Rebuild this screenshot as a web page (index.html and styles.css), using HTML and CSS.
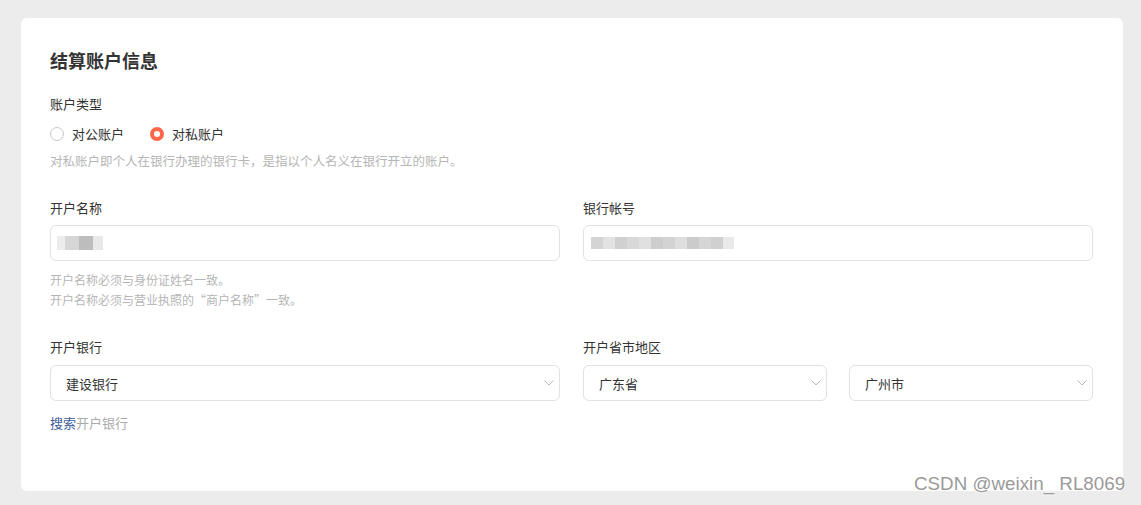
FILE: index.html
```html
<!DOCTYPE html>
<html lang="zh-CN">
<head>
<meta charset="utf-8">
<title>结算账户信息</title>
<link rel="stylesheet" href="styles.css">
</head>
<body>
<div class="card">
  <h2 class="title">结算账户信息</h2>

  <div class="field">
    <div class="label">账户类型</div>
    <div class="radios">
      <label class="radio"><span class="dot"></span>对公账户</label>
      <label class="radio checked"><span class="dot"></span>对私账户</label>
    </div>
    <div class="help help-wide">对私账户即个人在银行办理的银行卡，是指以个人名义在银行开立的账户。</div>
  </div>

  <div class="row row-1">
    <div class="field">
      <div class="label">开户名称</div>
      <div class="input">
        <div class="mask mask-name">
          <i style="background:#ececec;width:8px"></i>
          <i style="background:#d6d6d6;width:14px"></i>
          <i style="background:#bdbdbd;width:14px"></i>
          <i style="background:#e8e8e8;width:10px"></i>
        </div>
      </div>
      <div class="help help-lines">
        <div>开户名称必须与身份证姓名一致。</div>
        <div>开户名称必须与营业执照的“商户名称”一致。</div>
      </div>
    </div>
    <div class="field">
      <div class="label">银行帐号</div>
      <div class="input">
        <div class="mask mask-acct">
          <i style="background:#d4d4d4;width:12px"></i>
          <i style="background:#e2e2e2;width:12px"></i>
          <i style="background:#d0d0d0;width:12px"></i>
          <i style="background:#d8d8d8;width:12px"></i>
          <i style="background:#e0e0e0;width:12px"></i>
          <i style="background:#cdcdcd;width:12px"></i>
          <i style="background:#d3d3d3;width:12px"></i>
          <i style="background:#dedede;width:12px"></i>
          <i style="background:#cbcbcb;width:12px"></i>
          <i style="background:#d6d6d6;width:12px"></i>
          <i style="background:#d0d0d0;width:12px"></i>
          <i style="background:#e9e9e9;width:11px"></i>
        </div>
      </div>
    </div>
  </div>

  <div class="row row-2">
    <div class="field">
      <div class="label">开户银行</div>
      <div class="select">
        <span>建设银行</span>
        <svg class="chev" width="10" height="6" viewBox="0 0 10 6"><path d="M0.5 0.5 L5 5 L9.5 0.5" fill="none" stroke="#b8b8b8" stroke-width="1"/></svg>
      </div>
      <div class="help search"><a class="link">搜索</a>开户银行</div>
    </div>
    <div class="field">
      <div class="label">开户省市地区</div>
      <div class="pair">
        <div class="select">
          <span>广东省</span>
          <svg class="chev" width="10" height="6" viewBox="0 0 10 6"><path d="M0.5 0.5 L5 5 L9.5 0.5" fill="none" stroke="#b8b8b8" stroke-width="1"/></svg>
        </div>
        <div class="select">
          <span>广州市</span>
          <svg class="chev" width="10" height="6" viewBox="0 0 10 6"><path d="M0.5 0.5 L5 5 L9.5 0.5" fill="none" stroke="#b8b8b8" stroke-width="1"/></svg>
        </div>
      </div>
    </div>
  </div>
</div>
<div class="watermark">CSDN @weixin_ RL8069</div>
</body>
</html>
```

FILE: styles.css
```css
html, body {
  margin: 0;
  padding: 0;
}
body {
  background: #ececec;
  font-family: "Noto Sans CJK SC", "Noto Sans", sans-serif;
  color: #333;
  padding: 18px 18px 14px 21px;
  position: relative;
}
.card {
  background: #fff;
  border-radius: 6px;
  height: 473px;
  box-sizing: border-box;
  padding: 30px 30px 0 29px;
}
.title {
  margin: 0;
  font-size: 18px;
  line-height: 24px;
  font-weight: 700;
  color: #333;
}
.field {
  display: flex;
  flex-direction: column;
}
.card > .field {
  margin-top: 22px;
}
.label {
  font-size: 13px;
  line-height: 20px;
  height: 20px;
  color: #333;
}
.radios {
  display: flex;
  margin-top: 10px;
  height: 20px;
  align-items: center;
}
.radio {
  display: flex;
  align-items: center;
  font-size: 13px;
  line-height: 20px;
  color: #333;
  margin-right: 26px;
}
.dot {
  width: 14px;
  height: 14px;
  box-sizing: border-box;
  border: 1px solid #c8c8cc;
  border-radius: 50%;
  margin-right: 8px;
  background: #fff;
}
.radio.checked .dot {
  border: 4px solid #ff6548;
}
.help {
  font-size: 12px;
  line-height: 20px;
  color: #b5b5b5;
  margin-top: 7px;
}
.help-wide {
  font-size: 12.5px;
}
.help-lines > div {
  height: 20px;
}
.row {
  display: grid;
  grid-template-columns: 510px 510px;
  column-gap: 23px;
  align-items: start;
}
.row-1 {
  margin-top: 27px;
}
.row-2 {
  margin-top: 27px;
}
.input, .select {
  margin-top: 7px;
  height: 36px;
  box-sizing: border-box;
  border: 1px solid #e2e2e2;
  border-radius: 6px;
  display: flex;
  align-items: center;
}
.row-2 .select {
  margin-top: 8px;
}
.input {
  padding-left: 6px;
}
.mask {
  display: flex;
  filter: blur(0.6px);
}
.mask i {
  display: block;
  height: 14px;
}
.mask-acct {
  padding-left: 1px;
}
.mask-acct i {
  height: 12px;
}
.help-lines {
  margin-top: 9px;
}
.select {
  padding: 0 5px 0 15px;
  justify-content: space-between;
  font-size: 13px;
  color: #333;
}
.pair {
  display: grid;
  grid-template-columns: 244px 244px;
  column-gap: 22px;
}
.search {
  margin-top: 12px;
  font-size: 13px;
  line-height: 20px;
  height: 20px;
  color: #aaa;
}
.link {
  color: #3d5c9e;
}
.watermark {
  position: absolute;
  left: 914px;
  top: 473px;
  font-family: "Liberation Sans", Arial, sans-serif;
  font-size: 18.8px;
  line-height: 22px;
  color: #9a9a9a;
  text-shadow: 0 0 2px #fff, 0 0 2px #fff;
}
```
